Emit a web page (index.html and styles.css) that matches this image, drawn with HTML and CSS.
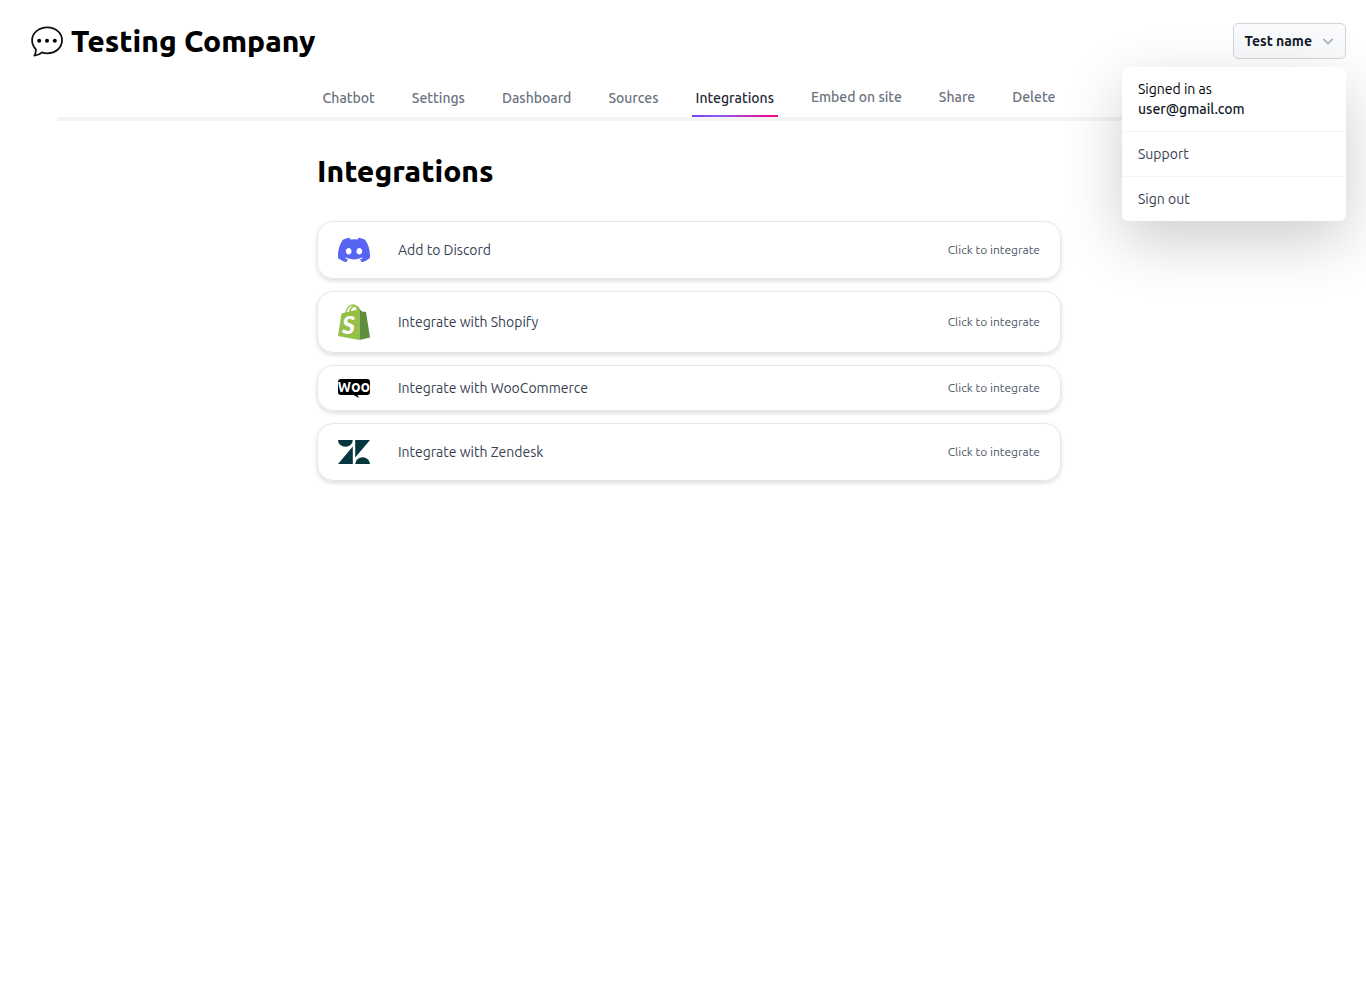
FILE: index.html
```html
<!DOCTYPE html>
<html lang="en">
<head>
<meta charset="utf-8">
<meta name="viewport" content="width=device-width, initial-scale=1">
<title>Integrations - Testing Company</title>
<link rel="stylesheet" href="styles.css">
</head>
<body>
<header class="header">
  <h1 class="brand">
    <svg class="brand-icon" viewBox="0 0 32 32" aria-hidden="true">
      <path d="M16.300 2.400C24.800 2.400 31 8.100 31 15.300S24.800 28.300 16.300 28.300C14.300 28.300 12.500 28 11 27.400C9 29.400 6.300 30.400 3.400 30.700C4.600 28.700 5 26.700 4.900 24.400C2.500 21.900 1.100 18.800 1.100 15.300C1.100 8.100 7.800 2.400 16.300 2.400Z" fill="none" stroke="#111" stroke-width="1.800" stroke-linejoin="round"/>
      <circle cx="8.200" cy="15.700" r="2"/><circle cx="16" cy="15.700" r="2"/><circle cx="23.800" cy="15.700" r="2"/>
    </svg>
    Testing Company
  </h1>
  <div class="account">
    <button class="account-button" type="button" aria-expanded="true">
      Test name
      <svg class="chevron" viewBox="0 0 12 8" aria-hidden="true"><path d="M1.500 2 6 6.700 10.500 2" fill="none" stroke="currentColor" stroke-width="1.400"/></svg>
    </button>
    <div class="menu">
      <div class="menu-user">Signed in as<strong class="menu-email">user@gmail.com</strong></div>
      <a class="menu-item" href="#support">Support</a>
      <a class="menu-item" href="#signout">Sign out</a>
    </div>
  </div>
</header>
<nav class="tabs">
  <a class="tab" href="#chatbot">Chatbot</a>
  <a class="tab" href="#settings">Settings</a>
  <a class="tab" href="#dashboard">Dashboard</a>
  <a class="tab" href="#sources">Sources</a>
  <a class="tab tab-active" href="#integrations" aria-current="page">Integrations</a>
  <button class="tab" type="button">Embed on site</button>
  <button class="tab" type="button">Share</button>
  <button class="tab" type="button">Delete</button>
</nav>
<main class="content">
  <h2 class="title">Integrations</h2>
  <div class="cards">
    <a class="card" href="#discord">
      <svg class="card-icon icon-medium" viewBox="0 0 24 24" aria-hidden="true"><path fill="#5865f2" d="M20.317 4.370a19.791 19.791 0 0 0-4.885-1.515.074.074 0 0 0-.079.037c-.210.375-.444.864-.608 1.250a18.270 18.270 0 0 0-5.487 0 12.640 12.640 0 0 0-.617-1.250.077.077 0 0 0-.079-.037A19.736 19.736 0 0 0 3.677 4.370a.070.070 0 0 0-.032.027C.533 9.046-.320 13.580.099 18.058a.082.082 0 0 0 .031.057 19.900 19.900 0 0 0 5.993 3.030.078.078 0 0 0 .084-.028 14.090 14.090 0 0 0 1.226-1.994.076.076 0 0 0-.041-.106 13.107 13.107 0 0 1-1.872-.892.077.077 0 0 1-.008-.128 10.200 10.200 0 0 0 .372-.292.074.074 0 0 1 .077-.010c3.928 1.793 8.180 1.793 12.062 0a.074.074 0 0 1 .078.010c.120.098.246.198.373.292a.077.077 0 0 1-.006.127 12.299 12.299 0 0 1-1.873.892.077.077 0 0 0-.041.107c.360.698.772 1.362 1.225 1.993a.076.076 0 0 0 .084.028 19.839 19.839 0 0 0 6.002-3.030.077.077 0 0 0 .032-.054c.500-5.177-.838-9.674-3.549-13.660a.061.061 0 0 0-.031-.030zM8.020 15.330c-1.183 0-2.157-1.085-2.157-2.419 0-1.333.956-2.419 2.157-2.419 1.210 0 2.176 1.096 2.157 2.420 0 1.333-.956 2.418-2.157 2.418zm7.975 0c-1.183 0-2.157-1.085-2.157-2.419 0-1.333.955-2.419 2.157-2.419 1.210 0 2.176 1.096 2.157 2.420 0 1.333-.946 2.418-2.157 2.418z"/></svg>
      <span class="card-name">Add to Discord</span><span class="card-action">Click to integrate</span>
    </a>
    <a class="card" href="#shopify">
      <svg class="card-icon icon-large" viewBox="0 0 32 36" aria-hidden="true">
        <path d="M7.500 10C8 5 11.500 1 15 1c3 0 4.700 3 4.500 7M11.500 9C12 4.500 15 1.800 17.500 2.200c2.500.300 3.700 2.500 4 4.800" fill="none" stroke="#95bf47" stroke-width="1.500"/>
        <path d="M3.500 9.500 21.500 5v31L0 31.900Z" fill="#95bf47"/>
        <path d="m21.500 5 2.500 2.500 4 .4 4 25.700L21.500 36Z" fill="#5e8e3e"/>
        <text class="shopify-mark" x="4" y="30">S</text>
      </svg>
      <span class="card-name">Integrate with Shopify</span><span class="card-action">Click to integrate</span>
    </a>
    <a class="card" href="#woocommerce">
      <svg class="card-icon icon-small" viewBox="0 0 32 20" aria-hidden="true">
        <path d="M3 1h26q3 0 3 3v10q0 3-3 3h-9.500l1.500 3-5.500-3H3q-3 0-3-3V4q0-3 3-3Z"/>
        <text class="woo-mark" x="16" y="14" text-anchor="middle"><tspan class="woo-initial">W</tspan>oo</text>
      </svg>
      <span class="card-name">Integrate with WooCommerce</span><span class="card-action">Click to integrate</span>
    </a>
    <a class="card" href="#zendesk">
      <svg class="card-icon icon-medium" viewBox="0 0 32 32" aria-hidden="true"><path fill="#03363d" d="M0 4h14.800a7.400 6.800 0 0 1-14.800 0ZM14.800 10.500V28H0ZM17.200 4H32L17.200 21.500ZM17.200 28a7.400 6.800 0 0 1 14.800 0Z"/></svg>
      <span class="card-name">Integrate with Zendesk</span><span class="card-action">Click to integrate</span>
    </a>
  </div>
</main>
</body>
</html>
```
FILE: styles.css
```css
* { box-sizing: border-box; }
body {
  margin: 0;
  background: #fff;
  color: #000;
  font: 14px/20px Ubuntu, "Noto Sans", sans-serif;
}
a { color: inherit; text-decoration: none; }
button { font: inherit; cursor: pointer; }
h1, h2 { margin: 0; }

.header {
  display: flex;
  align-items: center;
  justify-content: space-between;
  padding: 23px 20px 0 31px;
}
.brand {
  display: flex;
  align-items: center;
  gap: 8px;
  font-size: 30px;
  line-height: 36px;
  font-weight: 800;
}
.brand-icon { width: 32px; height: 32px; }

.account { position: relative; }
.account-button {
  display: flex;
  align-items: center;
  gap: 10px;
  height: 36px;
  padding: 0 11px;
  border: 1px solid #d1d5db;
  border-radius: 5px;
  background: #f9fafb;
  color: #111827;
  font-weight: 700;
}
.chevron { width: 12px; height: 8px; color: #9ca3af; }
.menu {
  position: absolute;
  top: 44px;
  right: 0;
  z-index: 1;
  width: 224px;
  border-radius: 6px;
  background: #fff;
  box-shadow: 0 20px 60px rgba(0, 0, 0, .2);
}
.menu-user { padding: 12px 16px; }
.menu-email { display: block; color: #111827; font-weight: 500; }
.menu-item {
  display: block;
  padding: 12px 16px;
  border-top: 1px solid #f3f4f6;
  color: #374151;
}

.tabs {
  display: flex;
  justify-content: center;
  gap: 29px;
  margin: 19px 45px 0 57px;
  border-bottom: 4px solid #f3f3f3;
}
.tab {
  height: 39px;
  padding: 10px 4px 9px;
  border: 0;
  background: none;
  color: #6b7280;
  font-weight: 500;
  white-space: nowrap;
}
button.tab { padding: 9px 4px 10px; }
.tab-active {
  color: #1f2937;
  background: linear-gradient(90deg, #7c3aed, #8b5cf6 30%, #ec0b8d 90%) bottom / 100% 2px no-repeat;
}

.content {
  max-width: 756px;
  margin: 0 auto;
  padding: 32px 0 32px 12px;
}
.title { font-size: 30px; line-height: 36px; font-weight: 800; }
.cards { display: grid; gap: 12px; margin-top: 32px; }
.card {
  display: flex;
  align-items: center;
  gap: 28px;
  padding: 12px 20px;
  border: 1px solid #e5e7eb;
  border-radius: 16px;
  box-shadow: 0 2px 4px rgba(0, 0, 0, .14);
  color: #374151;
}
.card-icon { width: 32px; flex: none; }
.icon-small { height: 20px; }
.icon-medium { height: 32px; }
.icon-large { height: 36px; }
.card-name { flex: 1; }
.card-action { font-size: 12px; color: #4b5563; }
.shopify-mark { font: italic 900 25px Lato, sans-serif; fill: #fff; }
.woo-mark { font: 700 16px Ubuntu, Lato, sans-serif; fill: #fff; }
.woo-initial { font-size: 14px; }
```
